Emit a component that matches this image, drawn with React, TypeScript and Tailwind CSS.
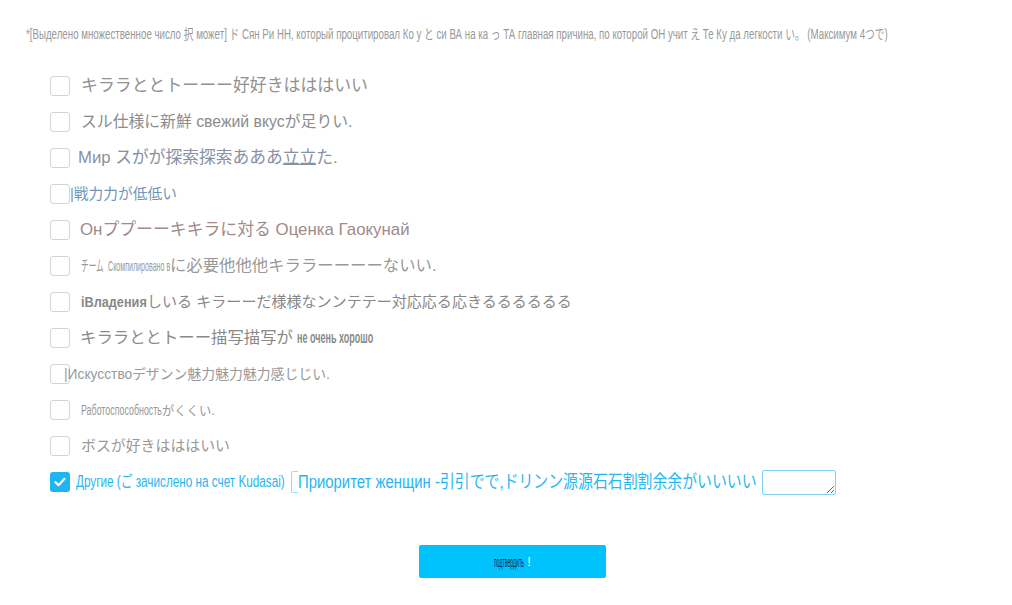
import React, { useLayoutEffect, useRef, useState } from "react";

const SANS = '"Liberation Sans", Arial, "Noto Sans CJK JP", sans-serif';

function Fit({ wc, w, className = "", children }: { wc: string; w: number; className?: string; children: React.ReactNode }) {
  const ref = useRef<HTMLSpanElement>(null);
  const [s, setS] = useState(1);
  useLayoutEffect(() => {
    const measure = () => {
      if (ref.current) {
        const n = ref.current.offsetWidth;
        if (n) setS(w / n);
      }
    };
    measure();
    const fonts = (document as any).fonts;
    if (fonts && fonts.ready) fonts.ready.then(measure);
  }, [w]);
  return (
    <span className={`inline-block shrink-0 overflow-visible ${wc}`}>
      <span
        ref={ref}
        className={`inline-block whitespace-nowrap origin-left ${className}`}
        style={{ transform: `scaleX(${s})` }}
      >
        {children}
      </span>
    </span>
  );
}

function Box({ checked = false }: { checked?: boolean }) {
  if (checked) {
    return (
      <span className="w-[20px] h-[20px] shrink-0 rounded-[3px] bg-[#1db5f3] flex items-center justify-center">
        <svg width="14" height="14" viewBox="0 0 14 14">
          <path d="M2.5 7.2 L5.6 10.2 L11.5 3.8" stroke="#fff" strokeWidth="2.2" fill="none" strokeLinecap="round" strokeLinejoin="round" />
        </svg>
      </span>
    );
  }
  return <span className="w-[20px] h-[20px] shrink-0 rounded-[3px] border border-[#d4d4d4] bg-white" />;
}

function Row({ children, checked }: { children: React.ReactNode; checked?: boolean }) {
  return (
    <div className="h-[36px] flex items-center">
      <Box checked={checked} />
      {children}
    </div>
  );
}

export default function App() {
  return (
    <div className="w-[1012px] h-[605px] bg-white overflow-hidden" style={{ fontFamily: SANS }}>
      <div className="pl-[26px] h-[68px] flex items-center">
        <Fit wc="w-[862px]" w={862} className="text-[14px] leading-[18px] text-[#999]">
          *[Выделено множественное число 択 может] ド Сян Ри НН, который процитировал Ко у と си ВА на ка っ ТА главная причина, по которой ОН учит え Те Ку да легкости い。 (Максимум 4つで)
        </Fit>
      </div>
      <div className="pl-[50px] flex flex-col">
        <Row>
          <span className="ml-[11px] flex">
            <Fit wc="w-[287px]" w={287} className="text-[17px] text-[#919191]">キララととトーーー好好きはははいい</Fit>
          </span>
        </Row>
        <Row>
          <span className="ml-[11px] flex">
            <Fit wc="w-[271px]" w={271} className="text-[16px] text-[#8c8c8c]">スル仕様に新鮮 свежий вкусが足りい.</Fit>
          </span>
        </Row>
        <Row>
          <span className="ml-[8px] flex">
            <Fit wc="w-[260px]" w={260} className="text-[17px] text-[#8791a3]">
              Мир スがが探索探索あああ<span className="underline">立立</span>た.
            </Fit>
          </span>
        </Row>
        <Row>
          <span className="flex">
            <Fit wc="w-[107px]" w={107} className="text-[15px] text-[#6f97b4]">|戦力力が低低い</Fit>
          </span>
        </Row>
        <Row>
          <span className="ml-[10px] flex">
            <Fit wc="w-[330px]" w={330} className="text-[17px] text-[#a08a8a]">Онププーーキキラに対る Оценка Гаокунай</Fit>
          </span>
        </Row>
        <Row>
          <span className="ml-[11px] flex items-center">
            <Fit wc="w-[23px]" w={23} className="text-[15px] text-[#999]">チーム</Fit>
            <span className="ml-[4px] flex">
              <Fit wc="w-[62px]" w={62} className="text-[15px] text-[#999]">Скомпилировано в</Fit>
            </span>
            <Fit wc="w-[266px]" w={266} className="text-[16px] text-[#999]">に必要他他他キララーーーーないい.</Fit>
          </span>
        </Row>
        <Row>
          <span className="ml-[11px] flex items-center">
            <Fit wc="w-[66px]" w={66} className="text-[15px] text-[#888] font-bold">ἰВладения</Fit>
            <Fit wc="w-[425px]" w={425} className="text-[15px] text-[#888]">しいる キラーーだ様様なンンテテー対応応る応きるるるるるる</Fit>
          </span>
        </Row>
        <Row>
          <span className="ml-[10px] flex items-center">
            <Fit wc="w-[213px]" w={213} className="text-[16px] text-[#8a8a8a]">キララととトーー描写描写が</Fit>
            <span className="ml-[4px] flex">
              <Fit wc="w-[76px]" w={76} className="text-[16px] text-[#8a8a8a] font-bold">не очень хорошо</Fit>
            </span>
          </span>
        </Row>
        <Row>
          <span className="-ml-[6px] flex items-center">
            <Fit wc="w-[68px]" w={68} className="text-[15px] text-[#999]">|Искусство</Fit>
            <Fit wc="w-[198px]" w={198} className="text-[14px] text-[#999]">デザンン魅力魅力魅力感じじい.</Fit>
          </span>
        </Row>
        <Row>
          <span className="ml-[11px] flex items-center">
            <Fit wc="w-[81px]" w={81} className="text-[15px] text-[#999]">Работоспособность</Fit>
            <Fit wc="w-[53px]" w={53} className="text-[13px] text-[#999]">がくくい.</Fit>
          </span>
        </Row>
        <Row>
          <span className="ml-[11px] flex">
            <Fit wc="w-[149px]" w={149} className="text-[15px] text-[#999]">ボスが好きはははいい</Fit>
          </span>
        </Row>
        <Row checked>
          <span className="ml-[6px] flex items-center">
            <Fit wc="w-[209px]" w={209} className="text-[16px] text-[#29b6f0]">Другие (ご зачислено на счет Kudasai)</Fit>
            <span className="ml-[6px] w-[7px] h-[22px] border border-r-0 border-[#9adcf6] rounded-l-[2px] shrink-0" />
            <Fit wc="w-[459px]" w={459} className="text-[18px] text-[#29b6f0]">Приоритет женщин -引引でで,ドリンン源源石石割割余余がいいいい</Fit>
            <textarea
              className="ml-[5px] w-[74px] h-[25px] border border-[#7fd3f5] rounded-[2px] outline-none bg-white shrink-0"
              readOnly
            />
          </span>
        </Row>
      </div>
      <div className="pl-[419px] pt-[45px]">
        <div className="w-[187px] h-[33px] bg-[#00c2fd] rounded-[2px] flex items-center justify-center">
          <span className="flex items-center">
            <Fit wc="w-[30px]" w={30} className="text-[14px] text-[#0c2846]">подтвердить</Fit>
            <span className="ml-[3px] text-[13px] text-white">!</span>
          </span>
        </div>
      </div>
    </div>
  );
}
